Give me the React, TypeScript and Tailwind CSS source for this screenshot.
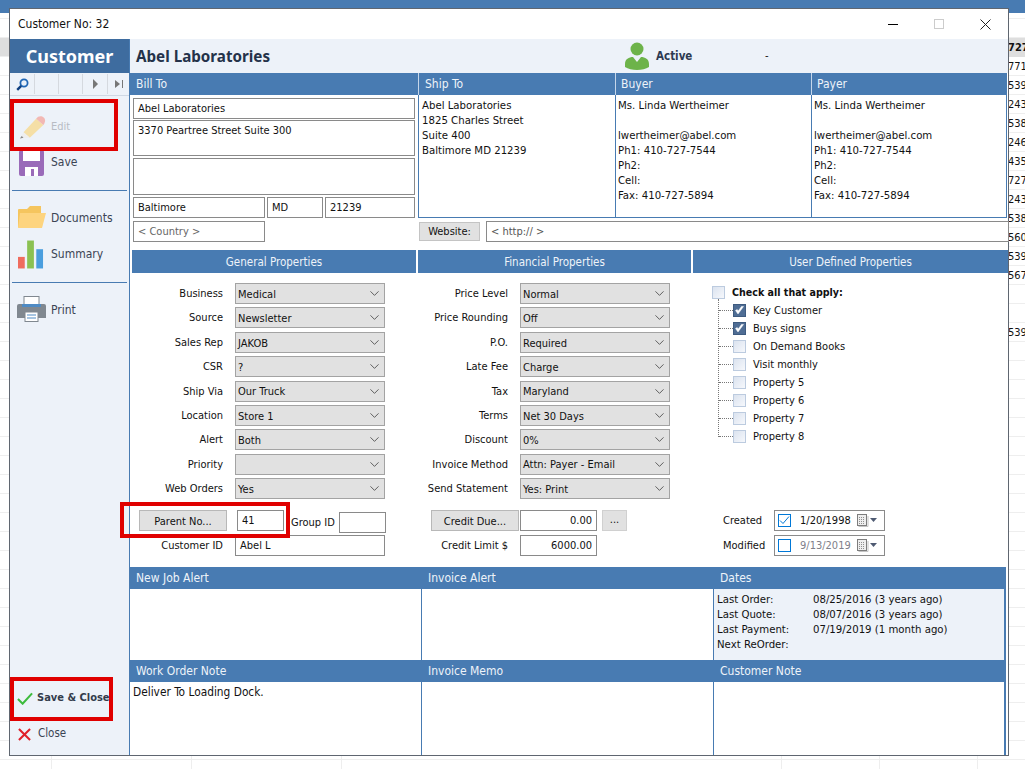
import React from "react";
import { ChevronDown } from "lucide-react";

const BLUE = "bg-[#487bb2]";

function Head({ children, className = "" }: { children?: React.ReactNode; className?: string }) {
  return <div className={`${BLUE} text-[#eef3f9] text-[12px] h-[22px] flex items-center pl-[6px] ${className}`}>{children}</div>;
}

function SectionHead({ children, className = "" }: { children: React.ReactNode; className?: string }) {
  return <div className={`${BLUE} text-[#eef3f9] text-[11.5px] h-[23px] pt-[2px] flex items-center justify-center ${className}`}>{children}</div>;
}

function Box({ children, className = "" }: { children?: React.ReactNode; className?: string }) {
  return <div className={`border border-[#8a8a8a] bg-white px-[4px] pt-[2px] flex items-center shrink-0 whitespace-nowrap ${className}`}>{children}</div>;
}

function Select({ value }: { value: string }) {
  return (
    <div className="w-[150px] h-[21px] border border-[#a3a3a3] bg-[#e1e1e1] flex items-center justify-between pl-[2px] pr-[2px] shrink-0">
      <span className="pt-[3px]">{value}</span>
      <ChevronDown size={15} strokeWidth={1.2} className="text-[#333]" />
    </div>
  );
}

function FieldRows({ rows, labelW }: { rows: [string, string][]; labelW: string }) {
  return (
    <div className="flex flex-col">
      {rows.map(([l, v]) => (
        <div key={l} className="h-[24.375px] flex items-start">
          <div className={`${labelW} text-right pr-[12px] leading-[21px] shrink-0`}>{l}</div>
          <Select value={v} />
        </div>
      ))}
    </div>
  );
}

function Tick({ checked = false, className = "" }: { checked?: boolean; className?: string }) {
  return checked ? (
    <div className={`w-[13px] h-[13px] bg-[#4f6d94] border border-[#3e5b80] flex items-center justify-center shrink-0 ${className}`}>
      <svg width="11" height="11" viewBox="0 0 11 11"><path d="M1.5 5.5 L4 9 L9.5 1.5 L7.5 1.5 L4.2 6 L3.2 4.5 Z" fill="#fff" stroke="#fff" strokeWidth="0.5" /></svg>
    </div>
  ) : (
    <div className={`w-[13px] h-[13px] border border-[#bccbdf] bg-gradient-to-br from-[#dbe3ef] to-[#f6f8fc] shrink-0 ${className}`} />
  );
}

function DateBox({ value, checked, dim }: { value: string; checked?: boolean; dim?: boolean }) {
  return (
    <div className="w-[111px] h-[21px] border border-[#8a8a8a] bg-white flex items-center pl-[3px] pr-[6px] shrink-0">
      <div className="w-[13px] h-[13px] border border-[#0078d7] flex items-center justify-center shrink-0">
        {checked && (
          <svg width="11" height="11" viewBox="0 0 11 11"><path d="M1 5.5 L4 8.5 L10 1.5" fill="none" stroke="#0078d7" strokeWidth="1" /></svg>
        )}
      </div>
      <span className={`ml-[9px] pt-[2px] ${dim ? "text-[#80808a]" : ""}`}>{value}</span>
      <svg width="21" height="13" viewBox="0 0 21 13" className="ml-auto shrink-0">
        <rect x="0.5" y="0.5" width="9" height="11" fill="#eeeeee" stroke="#7d7d7d" />
        <path d="M2 3.5h6M2 5.5h6M2 7.5h6M2 9.5h6" stroke="#8f8f8f" strokeWidth="1" strokeDasharray="1 1" />
        <path d="M1.5 12.5h9.5V2" fill="none" stroke="#c4c4c4" />
        <path d="M13 4h7l-3.5 4z" fill="#4e5a72" />
      </svg>
    </div>
  );
}

function SideItem({ icon, label, className = "", labelClass = "pt-[2px] text-[12px] text-[#3b4454]" }: { icon: React.ReactNode; label: string; className?: string; labelClass?: string }) {
  return (
    <div className={`flex items-center ${className}`}>
      <div className="w-[41px] pl-[7px] flex justify-start shrink-0">{icon}</div>
      <span className={labelClass}>{label}</span>
    </div>
  );
}

const Pencil = () => (
  <svg width="27" height="26" viewBox="0 0 30 28" className="ml-[2px]">
    <path d="M5 21 L19 6 L27 13 L12 27 Z" fill="#f5dfa6" />
    <path d="M19 6 C22 1 29 3 29 8 C29 10 28 12 27 13 Z" fill="#f2b8b4" />
    <path d="M5 21 L12 27 L1 28 Z" fill="#eeeeee" />
    <path d="M3 25 L5 27 L1 28 Z" fill="#888" />
  </svg>
);
const Floppy = () => (
  <svg width="25" height="26" viewBox="0 0 25 26" className="ml-[2px] mt-[4px]">
    <path d="M0 2a2 2 0 0 1 2-2h21a2 2 0 0 1 2 2v22a2 2 0 0 1-2 2H2a2 2 0 0 1-2-2z" fill="#9a6bb9" />
    <rect x="4" y="0" width="17" height="11" fill="#fff" />
    <rect x="6" y="17" width="13" height="9" fill="#fff" />
    <rect x="12" y="19" width="3" height="7" fill="#9a6bb9" />
  </svg>
);
const Folder = () => (
  <svg width="30" height="23" viewBox="0 0 30 23">
    <path d="M1 21 V4 Q1 3 2 3 L10 3 L13 0 H24 V21 Z" fill="#f5c55e" />
    <path d="M3 7 L29 7 L25 22 L1 22 Z" fill="#fdd47f" />
  </svg>
);
const Bars = () => (
  <svg width="26" height="29" viewBox="0 0 27 29" className="ml-[1px]">
    <rect x="0" y="17" width="7" height="12" fill="#ef6c5e" />
    <rect x="9.5" y="0" width="7" height="29" fill="#8bc152" />
    <rect x="19" y="9" width="7" height="20" fill="#4a9ede" />
  </svg>
);
const Printer = () => (
  <svg width="29" height="26" viewBox="0 0 29 26">
    <rect x="7" y="0.5" width="15" height="10" fill="#fff" stroke="#808890" />
    <path d="M0 10a2 2 0 0 1 2-2h25a2 2 0 0 1 2 2v12H0z" fill="#808890" />
    <rect x="5" y="8" width="19" height="3" fill="#4f8bc4" />
    <rect x="8" y="16" width="13" height="9.5" fill="#fff" stroke="#808890" />
    <path d="M10 19h9M10 22h9" stroke="#4f8bc4" />
  </svg>
);
const Person = () => (
  <svg width="24" height="28" viewBox="0 0 24 28">
    <circle cx="12" cy="7" r="6.5" fill="#6db34a" />
    <path d="M0 22 C0 17 4 15 8 15 L12 20 L16 15 C20 15 24 17 24 22 V25 C18 29 6 29 0 25 Z" fill="#6db34a" />
  </svg>
);

const sideNums: [string, boolean][] = [
  ["727", true], ["771-", false], ["539-", false], ["243-", false], ["538-", false], ["246-", false], ["435-", false],
  ["727-", false], ["243-", false], ["538-", false], ["560-", false], ["539-", false], ["567", false], ["", false], ["", false],
  ["539", false],
];

const general: [string, string][] = [
  ["Business", "Medical"], ["Source", "Newsletter"], ["Sales Rep", "JAKOB"], ["CSR", "?"], ["Ship Via", "Our Truck"],
  ["Location", "Store 1"], ["Alert", "Both"], ["Priority", ""], ["Web Orders", "Yes"],
];
const financial: [string, string][] = [
  ["Price Level", "Normal"], ["Price Rounding", "Off"], ["P.O.", "Required"], ["Late Fee", "Charge"], ["Tax", "Maryland"],
  ["Terms", "Net 30 Days"], ["Discount", "0%"], ["Invoice Method", "Attn: Payer - Email"], ["Send Statement", "Yes: Print"],
];
const props: [string, boolean][] = [
  ["Key Customer", true], ["Buys signs", true], ["On Demand Books", false], ["Visit monthly", false],
  ["Property 5", false], ["Property 6", false], ["Property 7", false], ["Property 8", false],
];

const person = ["Ms. Linda Wertheimer", "", "lwertheimer@abel.com", "Ph1: 410-727-7544", "Ph2:", "Cell:", "Fax: 410-727-5894"];

export default function App() {
  const bodyCls = "h-[123px] border-b border-b-[#487bb2] border-l border-l-[#487bb2] pt-[3px] leading-[15px] whitespace-pre text-[11.3px]";
  return (
    <div className="relative w-[1025px] h-[769px] overflow-hidden bg-white text-[11px] text-[#111] font-['DejaVu_Sans_Condensed','DejaVu_Sans',sans-serif]">
      {/* spreadsheet behind the window */}
      <div className="absolute inset-0 bg-[repeating-linear-gradient(to_bottom,transparent_0,transparent_18px,#eeeeee_18px,#eeeeee_19px)]" />
      <div className="absolute left-0 right-0 top-0 h-[13px] bg-[#487bb2]" />
      <div className="absolute left-0 w-[10px] top-[38px] h-[18px] bg-[#dedede]" />
      <div className="absolute left-0 right-0 top-[756px] bottom-0 flex">
        <div className="w-[52px] border-r border-[#eeeeee]" />
        <div className="w-[140px] border-r border-[#eeeeee]" />
        <div className="w-[150px] border-r border-[#eeeeee]" />
        <div className="w-[440px] border-r border-[#eeeeee]" />
        <div className="w-[98px] border-r border-[#eeeeee]" />
        <div className="w-[98px] border-r border-[#eeeeee]" />
      </div>
      <div className="absolute left-[1008px] top-[38px] w-[17px] overflow-hidden flex flex-col leading-[19px]">
        {sideNums.map(([n, b], i) => (
          <div key={i} className={`h-[19px] whitespace-nowrap ${b ? "font-bold bg-[#dedede]" : ""}`}>{n}</div>
        ))}
      </div>

      {/* dialog window */}
      <div className="absolute left-[9px] top-[8px] w-[1000px] h-[748px] border border-[#5f6670] bg-white flex flex-col">
        <div className="h-[30px] flex items-center shrink-0 pl-[8px]">
          <span className="text-[12px]">Customer No: 32</span>
          <div className="ml-auto flex items-center">
            <div className="w-[46px] flex justify-center"><div className="w-[10px] h-px bg-black" /></div>
            <div className="w-[46px] flex justify-center"><div className="w-[10px] h-[10px] border border-[#cccccc]" /></div>
            <div className="w-[46px] flex justify-center">
              <svg width="11" height="11" viewBox="0 0 11 11"><path d="M0.5 0.5 L10.5 10.5 M10.5 0.5 L0.5 10.5" stroke="#222" /></svg>
            </div>
          </div>
        </div>

        <div className="flex-1 flex min-h-0">
          {/* sidebar */}
          <div className="w-[120px] shrink-0 bg-[#edf2f9] border-r border-[#487bb2] flex flex-col">
            <div className="h-[34px] bg-[#3e6c9f] text-white text-[18px] font-bold flex items-center justify-center font-['Noto_Sans',sans-serif]">Customer</div>
            <div className="h-[23px] flex items-center border-b border-[#cfd8e4] shrink-0">
              <div className="w-[24px] flex justify-center">
                <svg width="13" height="13" viewBox="0 0 13 13"><circle cx="8" cy="5" r="3.6" fill="#e8f0fa" stroke="#1f66b5" strokeWidth="1.8" /><path d="M5.2 7.8 L1.2 11.8" stroke="#0f3f7f" strokeWidth="2.4" /></svg>
              </div>
              <div className="w-[24px] h-[20px] border-l border-[#d5d9df]" />
              <div className="w-[24px] h-[20px] border-l border-[#d5d9df]" />
              <div className="w-[25px] h-[20px] border-l border-[#d5d9df] flex items-center justify-center">
                <svg width="7" height="10" viewBox="0 0 7 10"><path d="M1 0 L6 5 L1 10 Z" fill="#777" /></svg>
              </div>
              <div className="w-[22px] h-[20px] border-l border-[#d5d9df] flex items-center justify-center">
                <svg width="10" height="10" viewBox="0 0 10 10"><path d="M1 1 L6 5 L1 9 Z" fill="#777" /><path d="M8.5 1 V9" stroke="#777" /></svg>
              </div>
            </div>
            <SideItem className="h-[38px] mt-[11px]" icon={<Pencil />} label="Edit" labelClass="pt-[2px] text-[11px] text-[#b8bcc4]" />
            <SideItem className="h-[26px] mt-[3px]" icon={<Floppy />} label="Save" />
            <div className="h-px bg-[#487bb2] mx-[2px] mt-[16px]" />
            <SideItem className="h-[23px] mt-[15px]" icon={<Folder />} label="Documents" labelClass="text-[12px] text-[#3b4454]" />
            <SideItem className="h-[29px] mt-[11px]" icon={<Bars />} label="Summary" labelClass="pb-[1px] text-[12px] text-[#3b4454]" />
            <div className="h-px bg-[#487bb2] mx-[2px] mt-[13px]" />
            <SideItem className="h-[26px] mt-[13px]" icon={<Printer />} label="Print" />
            <div className="mt-auto flex flex-col">
              <div className="flex items-center h-[24px] pl-[7px] mb-[12px]">
                <svg width="16" height="13" viewBox="0 0 17 13" className="mr-[4px] shrink-0"><path d="M1 7 L6 12 L16 1" fill="none" stroke="#3dbb3d" strokeWidth="2.2" /></svg>
                <span className="font-bold text-[#333c4c] whitespace-nowrap">Save &amp; Close</span>
              </div>
              <div className="flex items-center h-[24px] pl-[8px] mb-[9px]">
                <svg width="13" height="13" viewBox="0 0 14 14" className="mr-[7px] shrink-0"><path d="M1 1 L13 13 M13 1 L1 13" stroke="#e0202a" strokeWidth="2.2" /></svg>
                <span className="text-[#3b4454] text-[11.5px]">Close</span>
              </div>
            </div>
          </div>

          {/* main */}
          <div className="w-[878px] shrink-0 flex flex-col min-w-0">
            <div className="h-[34px] bg-[#edf2f9] flex items-center shrink-0">
              <span className="ml-[6px] w-[489px] shrink-0 text-[15.2px] font-bold text-[#24324a] font-['Noto_Sans',sans-serif]">Abel Laboratories</span>
              <Person />
              <span className="ml-[7px] pt-[2px] w-[109px] shrink-0 font-bold text-[#2d3a52] text-[11.5px]">Active</span>
              <span>-</span>
            </div>

            <div className="flex shrink-0 h-[170px]">
              <div className="w-[288px] shrink-0 flex flex-col">
                <Head>Bill To</Head>
                <div className="pl-[3px] pt-[3px] flex flex-col gap-[1px]">
                  <Box className="w-[282px] h-[21px]">Abel Laboratories</Box>
                  <Box className="w-[282px] h-[36px] !items-start !pt-[2px]">3370 Peartree Street Suite 300</Box>
                  <Box className="w-[282px] h-[37px] mt-[1px]" />
                  <div className="flex gap-[2px] mt-[1px]">
                    <Box className="w-[132px] h-[21px]">Baltimore</Box>
                    <Box className="w-[56px] h-[21px]">MD</Box>
                    <Box className="w-[90px] h-[21px]">21239</Box>
                  </div>
                  <Box className="w-[132px] h-[21px] mt-[2px] text-[#666]">&lt; Country &gt;</Box>
                </div>
              </div>
              <div className="flex-1 flex flex-col min-w-0">
                <div className="flex">
                  <div className="w-[197px] shrink-0 flex flex-col">
                    <Head className="border-l border-[#c5d6ea]">Ship To</Head>
                    <div className={`${bodyCls} pl-[3px]`}>{["Abel Laboratories", "1825 Charles Street", "Suite 400", "Baltimore MD 21239"].join("\n")}</div>
                  </div>
                  <div className="w-[196px] shrink-0 flex flex-col">
                    <Head className="border-l border-[#c5d6ea] !pl-[5px]">Buyer</Head>
                    <div className={`${bodyCls} pl-[2px]`}>{person.join("\n")}</div>
                  </div>
                  <div className="w-[196px] shrink-0 flex flex-col">
                    <Head className="border-l border-[#c5d6ea] !pl-[5px]">Payer</Head>
                    <div className={`${bodyCls} pl-[2px] border-r border-r-[#487bb2]`}>{person.join("\n")}</div>
                  </div>
                </div>
                <div className="flex items-center mt-[3px] pl-[1px]">
                  <div className="w-[61px] h-[19px] pt-[2px] bg-[#e1e1e1] border border-[#c4c4c4] flex items-center justify-center shrink-0">Website:</div>
                  <Box className="ml-[6px] w-[523px] h-[21px] text-[#555]">&lt; http:// &gt;</Box>
                </div>
              </div>
            </div>

            <div className="flex gap-[2px] pl-[2px] mt-[7px] shrink-0">
              <SectionHead className="w-[284px]">General Properties</SectionHead>
              <SectionHead className="w-[273px]">Financial Properties</SectionHead>
              <SectionHead className="w-[315px]">User Defined Properties</SectionHead>
            </div>

            <div className="flex h-[294px] shrink-0">
              <div className="w-[288px] shrink-0 pt-[10px] flex flex-col">
                <FieldRows rows={general} labelW="w-[105px]" />
                <div className="flex items-start mt-[7.6px] h-[23px]">
                  <div className="ml-[9px] w-[88px] h-[21px] pt-[3px] bg-[#e1e1e1] border border-[#b8b8b8] flex items-center justify-center shrink-0">Parent No...</div>
                  <Box className="ml-[10px] w-[47px] h-[21px]">41</Box>
                  <span className="ml-[7px] w-[48px] shrink-0 whitespace-nowrap leading-[25px]">Group ID</span>
                  <Box className="w-[47px] h-[21px] mt-[2px]" />
                </div>
                <div className="flex items-center mt-[2px] h-[21px]">
                  <div className="w-[105px] text-right pr-[12px] pt-[2px] shrink-0">Customer ID</div>
                  <Box className="w-[150px] h-[21px]">Abel L</Box>
                </div>
              </div>

              <div className="w-[275px] shrink-0 pt-[10px] flex flex-col">
                <FieldRows rows={financial} labelW="w-[102px]" />
                <div className="flex items-start mt-[7.6px] h-[23px]">
                  <div className="ml-[13px] w-[88px] h-[21px] pt-[3px] bg-[#e1e1e1] border border-[#b8b8b8] flex items-center justify-center shrink-0">Credit Due...</div>
                  <Box className="ml-[1px] w-[77px] h-[21px] justify-end">0.00</Box>
                  <div className="ml-[5px] w-[25px] h-[21px] bg-[#e1e1e1] border border-[#d0d0d0] flex items-center justify-center shrink-0">...</div>
                </div>
                <div className="flex items-center mt-[2px] h-[21px]">
                  <div className="w-[102px] text-right pr-[12px] pt-[2px] shrink-0 whitespace-nowrap">Credit Limit $</div>
                  <Box className="w-[77px] h-[21px] justify-end">6000.00</Box>
                </div>
              </div>

              <div className="flex-1 flex flex-col pt-[13px] pl-[19px] min-w-0">
                <div className="flex items-center h-[13px]">
                  <Tick />
                  <span className="ml-[7px] font-bold text-[10.6px]">Check all that apply:</span>
                </div>
                <div className="relative ml-[6px] h-[138px] border-l border-dotted border-[#777] flex flex-col">
                  {props.map(([p, c]) => (
                    <div key={p} className="h-[18px] flex items-center shrink-0 translate-y-[2px]">
                      <div className="w-[14px] border-t border-dotted border-[#777]" />
                      <Tick checked={c} />
                      <span className="ml-[7px] pt-[2px]">{p}</span>
                    </div>
                  ))}
                </div>
                <div className="mt-[73px] flex items-center h-[21px] ml-[11px]">
                  <span className="w-[51px] shrink-0 pt-[2px]">Created</span>
                  <DateBox value="1/20/1998" checked />
                </div>
                <div className="mt-[4px] flex items-center h-[21px] ml-[11px]">
                  <span className="w-[51px] shrink-0 pt-[2px]">Modified</span>
                  <DateBox value="9/13/2019" dim />
                </div>
              </div>
            </div>

            <div className="flex flex-col flex-1 border-r-2 border-[#487bb2] w-[876px]">
              <div className="flex h-[93px]">
                <div className="w-[292px] shrink-0 flex flex-col border-r border-[#487bb2]"><Head>New Job Alert</Head></div>
                <div className="w-[292px] shrink-0 flex flex-col border-r border-[#487bb2]"><Head>Invoice Alert</Head></div>
                <div className="flex-1 flex flex-col bg-[#edf2f9]">
                  <Head>Dates</Head>
                  <div className="flex pl-[3px] pt-[3px] leading-[15px] text-[11.3px]">
                    <div className="w-[96px] shrink-0 whitespace-pre">{"Last Order:\nLast Quote:\nLast Payment:\nNext ReOrder:"}</div>
                    <div className="whitespace-pre">{"08/25/2016 (3 years ago)\n08/07/2016 (3 years ago)\n07/19/2019 (1 month ago)"}</div>
                  </div>
                </div>
              </div>
              <div className="flex flex-1">
                <div className="w-[292px] shrink-0 flex flex-col border-r border-[#487bb2]">
                  <Head>Work Order Note</Head>
                  <div className="pl-[3px] pt-[2px] text-[11.8px]">Deliver To Loading Dock.</div>
                </div>
                <div className="w-[292px] shrink-0 flex flex-col border-r border-[#487bb2]"><Head>Invoice Memo</Head></div>
                <div className="flex-1 flex flex-col"><Head>Customer Note</Head></div>
              </div>
            </div>
          </div>
        </div>
      </div>

      {/* red annotation boxes */}
      <div className="absolute left-[10px] top-[99px] w-[108px] h-[52px] border-[4px] border-[#e00000]" />
      <div className="absolute left-[120px] top-[502px] w-[170px] h-[36px] border-[4px] border-[#e00000]" />
      <div className="absolute left-[10px] top-[677px] w-[103px] h-[44px] border-[4px] border-[#e00000]" />
    </div>
  );
}
